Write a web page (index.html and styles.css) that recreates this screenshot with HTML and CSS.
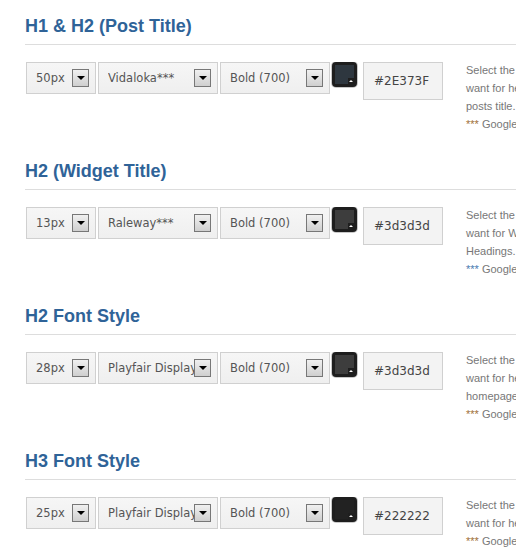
FILE: index.html
```html
<!doctype html>
<html lang="en">
<head>
	<meta charset="UTF-8">
	<title>Font Options</title>
	<link rel="stylesheet" href="styles.css">
</head>
<body>
	<div class="section">
		<h3 class="title">H1 &amp; H2 (Post Title)</h3>
		<div class="row">
			<div class="sel s1"><span>50px</span><i class="arrow"></i></div>
			<div class="sel s2"><span>Vidaloka***</span><i class="arrow"></i></div>
			<div class="sel s3"><span>Bold (700)</span><i class="arrow"></i></div>
			<div class="swatch"><b style="background:#2E373F"></b><em></em></div>
			<div class="hex">#2E373F</div>
			<p class="desc">Select the font you<br>want for headings and<br>posts title.<br><span class="star">***</span> Google Web Fonts</p>
		</div>
	</div>
	<div class="section">
		<h3 class="title">H2 (Widget Title)</h3>
		<div class="row">
			<div class="sel s1"><span>13px</span><i class="arrow"></i></div>
			<div class="sel s2"><span>Raleway***</span><i class="arrow"></i></div>
			<div class="sel s3"><span>Bold (700)</span><i class="arrow"></i></div>
			<div class="swatch"><b style="background:#3d3d3d"></b><em></em></div>
			<div class="hex">#3d3d3d</div>
			<p class="desc">Select the font you<br>want for Widget<br>Headings.<br><span class="star blue">***</span> Google Web Fonts</p>
		</div>
	</div>
	<div class="section">
		<h3 class="title">H2 Font Style</h3>
		<div class="row">
			<div class="sel s1"><span>28px</span><i class="arrow"></i></div>
			<div class="sel s2"><span>Playfair Display***</span><i class="arrow"></i></div>
			<div class="sel s3"><span>Bold (700)</span><i class="arrow"></i></div>
			<div class="swatch"><b style="background:#3d3d3d"></b><em></em></div>
			<div class="hex">#3d3d3d</div>
			<p class="desc">Select the font you<br>want for headings on<br>homepage posts.<br><span class="star">***</span> Google Web Fonts</p>
		</div>
	</div>
	<div class="section">
		<h3 class="title">H3 Font Style</h3>
		<div class="row">
			<div class="sel s1"><span>25px</span><i class="arrow"></i></div>
			<div class="sel s2"><span>Playfair Display***</span><i class="arrow"></i></div>
			<div class="sel s3"><span>Bold (700)</span><i class="arrow"></i></div>
			<div class="swatch"><b style="background:#222222"></b><em></em></div>
			<div class="hex">#222222</div>
			<p class="desc">Select the font you<br>want for headings.<br><span class="star">***</span> Google Web Fonts</p>
		</div>
	</div>
</body>
</html>
```

FILE: styles.css
```css
*{
	margin: 0;
	padding: 0;
}
html,body{
	background: #fff;
	overflow: hidden;
}
.section{
	padding-left: 25px;
	padding-top: 15px;
	height: 130px;
}
.title{
	font: bold 18px/22px "Liberation Sans", Arial, sans-serif;
	color: #2f6398;
	padding-bottom: 7px;
	border-bottom: 1px solid #dddddd;
}
.row{
	display: flex;
	align-items: flex-start;
	gap: 2px;
	margin-top: 17px;
	padding-left: 1px;
	overflow: hidden;
}
.row > *{
	flex: none;
}
.sel{
	position: relative;
	height: 30px;
	border: 1px solid #d0d0d0;
	background: linear-gradient(#f6f6f6, #efefef);
	font: 11.5px/30px "DejaVu Sans", Verdana, sans-serif;
	color: #555;
	padding-left: 9px;
	padding-right: 6px;
	white-space: nowrap;
}
.sel span{
	display: block;
	overflow: hidden;
}
.s1{
	width: 53px;
}
.s2{
	width: 103px;
}
.s3{
	width: 93px;
}
.arrow{
	position: absolute;
	right: 6px;
	top: 6px;
	width: 15px;
	height: 16px;
	border: 1px solid #777;
	background: linear-gradient(#f0f0f0, #cfcfcf);
}
.arrow:after{
	content: "";
	position: absolute;
	left: 4px;
	top: 6px;
	border-left: 4px solid transparent;
	border-right: 4px solid transparent;
	border-top: 4px solid #000;
}
.swatch{
	position: relative;
	width: 21px;
	height: 21px;
	border: 2px solid #1e1e1e;
	border-radius: 4px;
	background: #1e1e1e;
	box-shadow: 0 0 0 1px #c8c8c8;
}
.swatch b{
	display: block;
	width: 19px;
	height: 19px;
	margin: 1px;
}
.swatch em{
	position: absolute;
	right: 1px;
	bottom: 1px;
	width: 6px;
	height: 6px;
	background: #1e1e1e;
}
.swatch em:after{
	content: "";
	position: absolute;
	left: 1px;
	top: 2px;
	border-left: 2px solid transparent;
	border-right: 2px solid transparent;
	border-bottom: 2px solid #fff;
}
.hex{
	margin-left: 4px;
	width: 68px;
	height: 36px;
	padding-left: 10px;
	border: 1px solid #d0d0d0;
	background: #f3f3f3;
	font: 12px/37px "DejaVu Sans", Verdana, sans-serif;
	color: #444;
}
.desc{
	margin-left: 21px;
	margin-top: -1px;
	font: 11px/18px "Liberation Sans", Arial, sans-serif;
	color: #777;
	white-space: nowrap;
}
.star{
	color: #a0703a;
}
.star.blue{
	color: #4a7ab0;
}
```
